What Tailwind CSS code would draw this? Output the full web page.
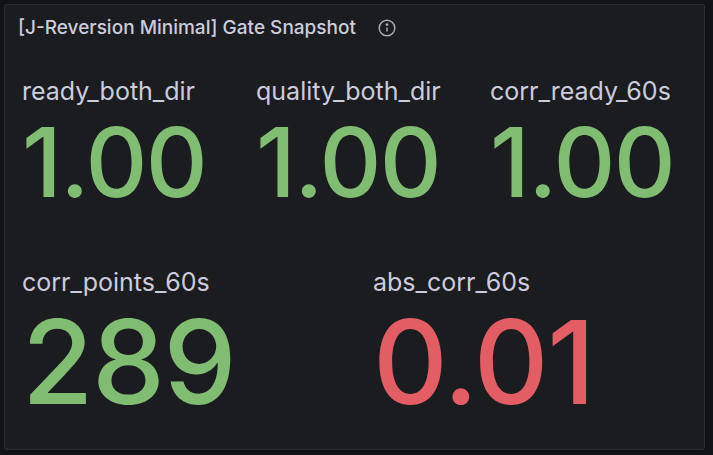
<!DOCTYPE html>
<html lang="en">
<head>
  <meta charset="UTF-8" />
  <title>Gate Snapshot</title>
  <script src="https://cdn.jsdelivr.net/npm/@tailwindcss/browser@4"></script>
</head>
<body class="bg-[#111217] w-[713px] h-[455px] overflow-hidden font-['Inter',sans-serif] pl-[4px] pt-[4px]">
  <div class="w-[701px] h-[446px] bg-[#1b1c20] border border-[#2d2e33] rounded-[3px] flex flex-col">
    <div class="flex items-center h-[46px] pl-[13px]">
      <h2 class="text-[#ccccdc] text-[19px] font-medium whitespace-nowrap">[J-Reversion Minimal] Gate Snapshot</h2>
      <svg class="ml-[22px]" width="18" height="18" viewBox="0 0 18 18" fill="none" stroke="#a9abb5" stroke-width="1.5"><circle cx="9" cy="9" r="7.8"/><path d="M9 8.5v4"/><circle cx="9" cy="5.6" r="0.7" fill="#a9abb5"/></svg>
    </div>
    <div class="flex pl-[17px] mt-[24px]">
      <div class="w-[234px]">
        <div class="text-[#ccccdc] text-[25px] leading-[32px] whitespace-nowrap">ready_both_dir</div>
        <div class="text-[#80bd72] text-[96px] leading-[110px] font-medium tracking-[-1.5px] whitespace-nowrap">1.00</div>
      </div>
      <div class="w-[234px]">
        <div class="text-[#ccccdc] text-[25px] leading-[32px] whitespace-nowrap">quality_both_dir</div>
        <div class="text-[#80bd72] text-[96px] leading-[110px] font-medium tracking-[-1.5px] whitespace-nowrap">1.00</div>
      </div>
      <div class="w-[210px]">
        <div class="text-[#ccccdc] text-[25px] leading-[32px] whitespace-nowrap">corr_ready_60s</div>
        <div class="text-[#80bd72] text-[96px] leading-[110px] font-medium tracking-[-1.5px] whitespace-nowrap">1.00</div>
      </div>
    </div>
    <div class="flex pl-[17px] mt-[49px]">
      <div class="w-[351px]">
        <div class="text-[#ccccdc] text-[25px] leading-[32px] whitespace-nowrap">corr_points_60s</div>
        <div class="text-[#80bd72] text-[116px] leading-[129px] font-medium tracking-[-1.5px] whitespace-nowrap">289</div>
      </div>
      <div class="w-[320px]">
        <div class="text-[#ccccdc] text-[25px] leading-[32px] whitespace-nowrap">abs_corr_60s</div>
        <div class="text-[#e35d65] text-[116px] leading-[129px] font-medium tracking-[-1.5px] whitespace-nowrap">0.01</div>
      </div>
    </div>
  </div>
</body>
</html>
